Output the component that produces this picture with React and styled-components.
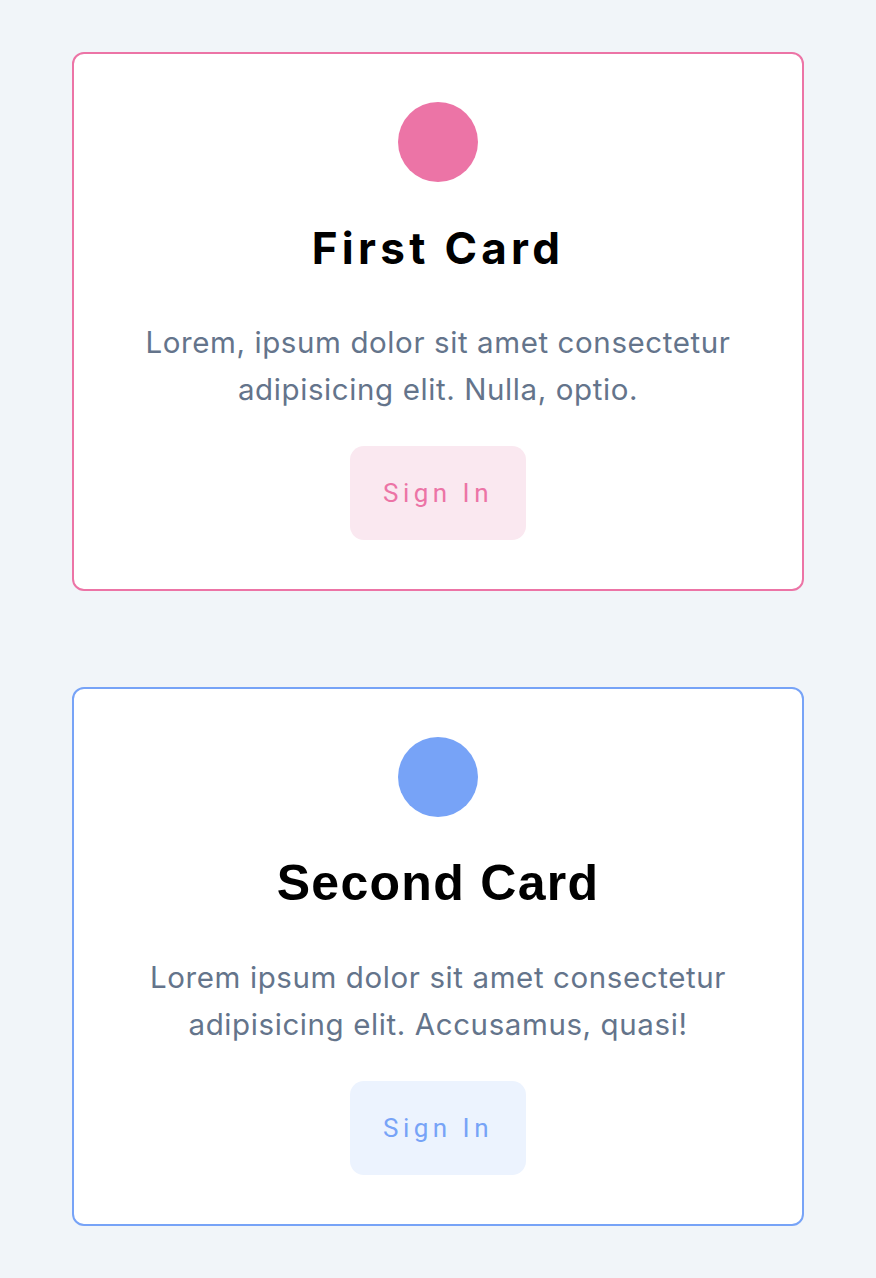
import React from 'react'
import styled, { createGlobalStyle } from 'styled-components'

const GlobalStyle = createGlobalStyle`
  * { box-sizing: border-box; }
  body {
    margin: 0;
    background: #f1f5f9;
    font-family: Inter, "Liberation Sans", sans-serif;
  }
`

const cards = [
  {
    title: 'First Card',
    text: 'Lorem, ipsum dolor sit amet consectetur adipisicing elit. Nulla, optio.',
    accent: '#ec74a6',
    soft: '#fae8f0',
    titleFont: 'Inter',
    titleSize: 44,
    titleSpacing: 4.3,
  },
  {
    title: 'Second Card',
    text: 'Lorem ipsum dolor sit amet consectetur adipisicing elit. Accusamus, quasi!',
    accent: '#77a3f7',
    soft: '#ecf3fe',
    titleFont: '"Liberation Sans"',
    titleSize: 50,
    titleSpacing: 1.3,
  },
]

const App = () => {
  return (
    <Page>
      <GlobalStyle />
      {cards.map((c) => (
        <Card key={c.title} $accent={c.accent}>
          <Dot $accent={c.accent} />
          <Title $font={c.titleFont} $size={c.titleSize} $spacing={c.titleSpacing}>
            {c.title}
          </Title>
          <Text>{c.text}</Text>
          <Button $accent={c.accent} $soft={c.soft}>Sign In</Button>
        </Card>
      ))}
    </Page>
  )
}

const Page = styled.main`
  display: flex;
  flex-direction: column;
  gap: 96px;
  padding: 52px 72px 54px;
`

const Card = styled.section`
  display: flex;
  flex-direction: column;
  align-items: center;
  background: #fff;
  border: 2px solid ${({ $accent }) => $accent};
  border-radius: 12px;
  padding: 48px 0 49px;
`

const Dot = styled.div`
  width: 80px;
  height: 80px;
  border-radius: 50%;
  background: ${({ $accent }) => $accent};
`

const Title = styled.h2`
  margin: 38px 0 43px;
  font-family: ${({ $font }) => $font}, sans-serif;
  font-size: ${({ $size }) => $size}px;
  font-weight: 700;
  letter-spacing: ${({ $spacing }) => $spacing}px;
  line-height: 56px;
  color: #000;
`

const Text = styled.p`
  margin: 0;
  max-width: 620px;
  font-size: 29.5px;
  line-height: 47px;
  letter-spacing: 0.6px;
  color: #64748b;
  text-align: center;
`

const Button = styled.button`
  margin-top: 33px;
  padding: 27px 33px 27px 33px;
  border: none;
  border-radius: 14px;
  background: ${({ $soft }) => $soft};
  color: ${({ $accent }) => $accent};
  font-family: Roboto, "Liberation Sans", sans-serif;
  font-size: 26px;
  line-height: 40px;
  letter-spacing: 4.5px;
  cursor: pointer;
`

export default App
